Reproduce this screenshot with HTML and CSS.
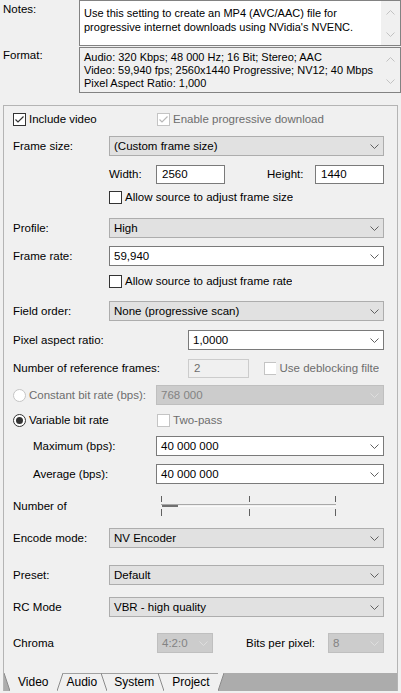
FILE: index.html
```html
<!DOCTYPE html>
<html lang="en">
<head>
    <meta charset="UTF-8">
    <title>Render Settings - Video</title>
    <link rel="stylesheet" href="styles.css">
</head>
<body>
    <div class="field">
        <div class="field-label">Notes:</div>
        <div class="memo memo-notes">
            <div class="memo-text">Use this setting to create an MP4 (AVC/AAC) file for<br>progressive internet downloads using NVidia's NVENC.</div>
            <div class="memo-scroll">
                <svg width="9" height="5"><polyline points="0.5,4.5 4.5,0.5 8.5,4.5"/></svg>
                <svg width="9" height="5"><polyline points="0.5,0.5 4.5,4.5 8.5,0.5"/></svg>
            </div>
        </div>
    </div>
    <div class="field">
        <div class="field-label">Format:</div>
        <div class="memo memo-format">
            <div class="memo-text">Audio: 320 Kbps; 48 000 Hz; 16 Bit; Stereo; AAC<br>Video: 59,940 fps; 2560x1440 Progressive; NV12; 40 Mbps<br>Pixel Aspect Ratio: 1,000</div>
            <div class="memo-scroll">
                <svg width="9" height="5"><polyline points="0.5,4.5 4.5,0.5 8.5,4.5"/></svg>
                <svg width="9" height="5"><polyline points="0.5,0.5 4.5,4.5 8.5,0.5"/></svg>
            </div>
        </div>
    </div>

    <div class="panel">
        <div class="panel-body">
            <div class="row">
                <label class="opt w144">
                    <svg class="box" width="13" height="13"><rect x="0.5" y="0.5" width="12" height="12"/><polyline points="2.5,6.5 5,9 10.5,3.5"/></svg>
                    Include video
                </label>
                <label class="opt off">
                    <svg class="box" width="13" height="13"><rect x="0.5" y="0.5" width="12" height="12"/><polyline points="2.5,6.5 5,9 10.5,3.5"/></svg>
                    Enable progressive download
                </label>
            </div>

            <div class="row mt7">
                <span class="lbl w96">Frame size:</span>
                <div class="combo">
                    <span class="combo-text">(Custom frame size)</span>
                    <svg class="chev" width="9" height="5"><polyline points="0.5,0.5 4.5,4.5 8.5,0.5"/></svg>
                </div>
            </div>

            <div class="row mt8 indent">
                <span class="lbl w47">Width:</span>
                <div class="edit w69">2560</div>
                <span class="lbl w48 ml42">Height:</span>
                <div class="edit w69">1440</div>
            </div>

            <div class="row mt3 indent">
                <label class="opt">
                    <svg class="box" width="13" height="13"><rect x="0.5" y="0.5" width="12" height="12"/></svg>
                    Allow source to adjust frame size
                </label>
            </div>

            <div class="row mt11">
                <span class="lbl w96">Profile:</span>
                <div class="combo">
                    <span class="combo-text">High</span>
                    <svg class="chev" width="9" height="5"><polyline points="0.5,0.5 4.5,4.5 8.5,0.5"/></svg>
                </div>
            </div>

            <div class="row mt8">
                <span class="lbl w96">Frame rate:</span>
                <div class="combo combo-edit">
                    <span class="combo-text">59,940</span>
                    <svg class="chev" width="9" height="5"><polyline points="0.5,0.5 4.5,4.5 8.5,0.5"/></svg>
                </div>
            </div>

            <div class="row mt5 indent">
                <label class="opt">
                    <svg class="box" width="13" height="13"><rect x="0.5" y="0.5" width="12" height="12"/></svg>
                    Allow source to adjust frame rate
                </label>
            </div>

            <div class="row mt10">
                <span class="lbl w96">Field order:</span>
                <div class="combo">
                    <span class="combo-text">None (progressive scan)</span>
                    <svg class="chev" width="9" height="5"><polyline points="0.5,0.5 4.5,4.5 8.5,0.5"/></svg>
                </div>
            </div>

            <div class="row mt9">
                <span class="lbl w175">Pixel aspect ratio:</span>
                <div class="combo combo-edit">
                    <span class="combo-text">1,0000</span>
                    <svg class="chev" width="9" height="5"><polyline points="0.5,0.5 4.5,4.5 8.5,0.5"/></svg>
                </div>
            </div>

            <div class="row mt8">
                <span class="lbl w175">Number of reference frames:</span>
                <div class="edit edit-off w61">2</div>
                <label class="opt off ml15 w115">
                    <svg class="box" width="13" height="13"><rect x="0.5" y="0.5" width="12" height="12"/></svg>
                    <span class="clip">Use deblocking filter</span>
                </label>
            </div>

            <div class="row mt7">
                <label class="opt off w143">
                    <svg class="dot" width="13" height="13"><circle cx="6.5" cy="6.5" r="6"/></svg>
                    Constant bit rate (bps):
                </label>
                <div class="combo combo-off">
                    <span class="combo-text">768 000</span>
                    <svg class="chev" width="9" height="5"><polyline points="0.5,0.5 4.5,4.5 8.5,0.5"/></svg>
                </div>
            </div>

            <div class="row mt5">
                <label class="opt w144">
                    <svg class="dot" width="13" height="13"><circle cx="6.5" cy="6.5" r="6"/><circle class="pip" cx="6.5" cy="6.5" r="3.5"/></svg>
                    Variable bit rate
                </label>
                <label class="opt off">
                    <svg class="box" width="13" height="13"><rect x="0.5" y="0.5" width="12" height="12"/></svg>
                    Two-pass
                </label>
            </div>

            <div class="row mt6">
                <span class="lbl w143 sub">Maximum (bps):</span>
                <div class="combo combo-edit">
                    <span class="combo-text">40 000 000</span>
                    <svg class="chev" width="9" height="5"><polyline points="0.5,0.5 4.5,4.5 8.5,0.5"/></svg>
                </div>
            </div>

            <div class="row mt8">
                <span class="lbl w143 sub">Average (bps):</span>
                <div class="combo combo-edit">
                    <span class="combo-text">40 000 000</span>
                    <svg class="chev" width="9" height="5"><polyline points="0.5,0.5 4.5,4.5 8.5,0.5"/></svg>
                </div>
            </div>

            <div class="row mt12">
                <span class="lbl w148">Number of</span>
                <svg class="slider" width="176" height="21">
                    <line class="tick" x1="0.5" y1="0" x2="0.5" y2="6"/>
                    <line class="tick" x1="88.5" y1="0" x2="88.5" y2="6"/>
                    <line class="tick" x1="174.5" y1="0" x2="174.5" y2="6"/>
                    <line class="track" x1="0" y1="8.5" x2="175" y2="8.5"/>
                    <line class="track-lo" x1="0" y1="10.5" x2="175" y2="10.5"/>
                    <rect class="thumb" x="1" y="9" width="16" height="2"/>
                    <line class="tick" x1="0.5" y1="13" x2="0.5" y2="20"/>
                    <line class="tick" x1="88.5" y1="13" x2="88.5" y2="20"/>
                    <line class="tick" x1="174.5" y1="13" x2="174.5" y2="20"/>
                </svg>
            </div>

            <div class="row mt12">
                <span class="lbl w96">Encode mode:</span>
                <div class="combo">
                    <span class="combo-text">NV Encoder</span>
                    <svg class="chev" width="9" height="5"><polyline points="0.5,0.5 4.5,4.5 8.5,0.5"/></svg>
                </div>
            </div>

            <div class="row mt17">
                <span class="lbl w96">Preset:</span>
                <div class="combo">
                    <span class="combo-text">Default</span>
                    <svg class="chev" width="9" height="5"><polyline points="0.5,0.5 4.5,4.5 8.5,0.5"/></svg>
                </div>
            </div>

            <div class="row mt12">
                <span class="lbl w96">RC Mode</span>
                <div class="combo">
                    <span class="combo-text">VBR - high quality</span>
                    <svg class="chev" width="9" height="5"><polyline points="0.5,0.5 4.5,4.5 8.5,0.5"/></svg>
                </div>
            </div>

            <div class="row mt16">
                <span class="lbl w144">Chroma</span>
                <div class="combo combo-off w56">
                    <span class="combo-text">4:2:0</span>
                    <svg class="chev" width="9" height="5"><polyline points="0.5,0.5 4.5,4.5 8.5,0.5"/></svg>
                </div>
                <span class="lbl w82 ml33">Bits per pixel:</span>
                <div class="combo combo-off w56">
                    <span class="combo-text">8</span>
                    <svg class="chev" width="9" height="5"><polyline points="0.5,0.5 4.5,4.5 8.5,0.5"/></svg>
                </div>
            </div>
        </div>

        <div class="tabs">
            <svg class="tab-edge" width="6" height="18"><polygon points="0,0 6,0 6,18"/><line x1="0" y1="0" x2="6" y2="18"/></svg>
            <span class="tab tab-video">Video</span>
            <svg class="tab-sep" width="6" height="18"><line x1="0" y1="18" x2="6" y2="0"/></svg>
            <span class="tab tab-audio">Audio</span>
            <svg class="tab-sep top" width="6" height="18"><line x1="0" y1="0" x2="6" y2="18"/></svg>
            <span class="tab tab-system">System</span>
            <svg class="tab-sep top" width="6" height="18"><line x1="0" y1="0" x2="6" y2="18"/></svg>
            <span class="tab tab-project">Project</span>
            <svg class="tab-edge" width="6" height="18"><polygon points="0,0 6,0 0,18"/><line x1="0" y1="18" x2="6" y2="0"/></svg>
        </div>
    </div>
</body>
</html>
```

FILE: styles.css
```css
body {
    margin: 0;
    width: 401px;
    height: 693px;
    overflow: hidden;
    background: #f0f0f0;
    font-family: "Segoe UI", "Liberation Sans", Arial, sans-serif;
    font-size: 11.5px;
    color: #000;
}

/* notes / format memo boxes */
.field {
    display: flex;
}

.field-label {
    width: 76px;
    padding: 3px 0 0 3px;
}

.memo {
    width: 322px;
    height: 46px;
    box-sizing: border-box;
    border: 1px solid #828282;
    display: flex;
}

.memo-notes {
    background: #fff;
}

.memo-format {
    margin-top: 1px;
    background: #f0f0f0;
}

.memo-text {
    flex: 1;
    white-space: nowrap;
    overflow: hidden;
}

.memo-notes .memo-text {
    padding: 5px 0 0 4px;
    font-size: 11px;
    line-height: 14px;
}

.memo-format .memo-text {
    padding: 3px 0 0 4px;
    font-size: 11px;
    line-height: 13px;
}

.memo-scroll {
    width: 19px;
    background: #f0f0f0;
    display: flex;
    flex-direction: column;
    justify-content: space-between;
    align-items: center;
    padding: 9px 0 8px;
}

.memo-scroll polyline {
    fill: none;
    stroke: #c2c2c2;
}

/* settings panel */
.panel {
    margin: 12px 0 0 3px;
    width: 395px;
    height: 586px;
    box-sizing: border-box;
    border: 1px solid #b4b4b4;
    border-bottom: none;
    display: flex;
    flex-direction: column;
}

.panel-body {
    flex: 1;
    padding: 3px 13px 0 9px;
}

.row {
    display: flex;
    align-items: center;
    height: 20px;
    white-space: nowrap;
}

.indent { padding-left: 96px; }

.mt3 { margin-top: 3px; }
.mt5 { margin-top: 5px; }
.mt6 { margin-top: 6px; }
.mt7 { margin-top: 7px; }
.mt8 { margin-top: 8px; }
.mt9 { margin-top: 9px; }
.mt10 { margin-top: 10px; }
.mt11 { margin-top: 11px; }
.mt12 { margin-top: 12px; }
.mt16 { margin-top: 16px; }
.mt17 { margin-top: 17px; }

.ml15 { margin-left: 15px; }
.ml33 { margin-left: 33px; }
.ml42 { margin-left: 42px; }

.w47 { width: 47px; }
.w48 { width: 48px; }
.w56 { width: 56px; flex: none !important; }
.w61 { width: 61px; }
.w69 { width: 69px; }
.w82 { width: 82px; }
.w96 { width: 96px; }
.w115 { width: 115px; }
.w143 { width: 143px; }
.w144 { width: 144px; }
.w148 { width: 148px; }
.w175 { width: 175px; }

.lbl {
    flex: none;
}

.lbl.sub {
    box-sizing: border-box;
    padding-left: 20px;
}

/* checkboxes and radios */
.opt {
    display: flex;
    align-items: center;
    gap: 3px;
    flex: none;
    overflow: hidden;
}

.opt.off {
    color: #6d6d6d;
}

.clip {
    overflow: hidden;
}

.box rect,
.dot circle {
    fill: #fff;
    stroke: #333;
}

.box polyline {
    fill: none;
    stroke: #333;
    stroke-width: 1.2;
}

.dot .pip {
    fill: #333;
    stroke: none;
}

.off .box rect,
.off .dot circle {
    stroke: #c4c4c4;
}

.off .box polyline {
    stroke: #b8b8b8;
}

/* combo boxes */
.combo {
    flex: 1;
    height: 20px;
    box-sizing: border-box;
    border: 1px solid #adadad;
    background: #e1e1e1;
    display: flex;
    align-items: center;
    padding: 0 4px 0 4px;
}

.combo-text {
    flex: 1;
}

.chev polyline {
    fill: none;
    stroke: #606060;
}

.combo-edit {
    background: #fff;
    border-color: #7a7a7a;
}

.combo-off {
    background: #cccccc;
    border-color: #bfbfbf;
    color: #838383;
}

.combo-off .chev polyline {
    stroke: #dedede;
}

/* text boxes */
.edit {
    flex: none;
    height: 19px;
    box-sizing: border-box;
    border: 1px solid #7a7a7a;
    background: #fff;
    padding-left: 5px;
    display: flex;
    align-items: center;
}

.edit-off {
    background: #f0f0f0;
    border-color: #cccccc;
    color: #6d6d6d;
}

/* trackbar */
.slider {
    flex: none;
}

.slider .tick {
    stroke: #606060;
}

.slider .track {
    stroke: #a8a8a8;
}

.slider .track-lo {
    stroke: #fafafa;
}

.slider .thumb {
    fill: #707070;
}

/* sheet tabs */
.tabs {
    height: 18px;
    background: #acacac;
    display: flex;
    flex: none;
    font-size: 12px;
    line-height: 18px;
}

.tab {
    background: #f0f0f0;
}

.tab-audio,
.tab-system,
.tab-project {
    box-shadow: inset 0 1px #a0a0a0;
}

.tab-video { padding: 0 9px 0 8px; }
.tab-audio { padding: 0 4px 0 3px; }
.tab-system { padding: 0 4px 0 7px; }
.tab-project { padding: 0 8px 0 8px; }

.tab-edge,
.tab-sep {
    flex: none;
}

.tab-sep {
    background: #f0f0f0;
}

.tab-sep.top {
    box-shadow: inset 0 1px #a0a0a0;
}

.tab-edge polygon {
    fill: #f0f0f0;
}

.tab-edge line,
.tab-sep line {
    stroke: #8a8a8a;
}
```
